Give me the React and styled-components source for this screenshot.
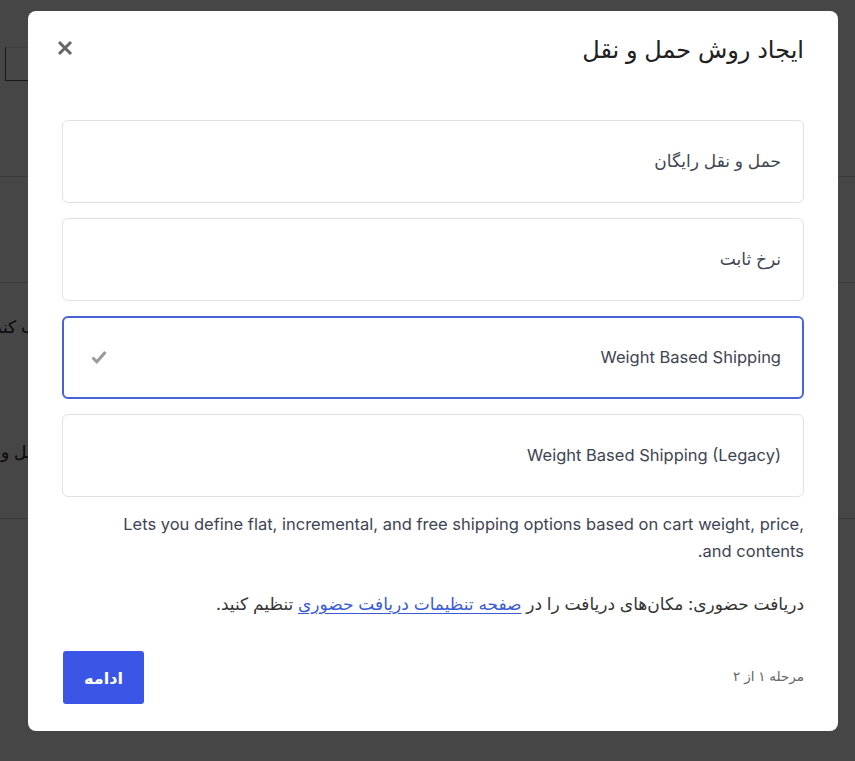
import React, { useState } from 'react'
import styled, { createGlobalStyle } from 'styled-components'

const GlobalStyle = createGlobalStyle`
  * { box-sizing: border-box; }
  html, body {
    margin: 0;
    padding: 0;
    font-family: "Inter", "DejaVu Sans", sans-serif;
  }
`

const options = [
  { id: 'free', label: 'حمل و نقل رایگان', fa: true },
  { id: 'flat', label: 'نرخ ثابت', fa: true },
  { id: 'weight', label: 'Weight Based Shipping' },
  { id: 'legacy', label: 'Weight Based Shipping (Legacy)' },
]

const BgPage = styled.div`
  position: fixed;
  inset: 0;
  background: #fbfbfb;
  direction: rtl;
  font-size: 16px;
  color: #222;
`

const BgHeader = styled.div`
  height: 177px;
  padding: 47px 120px 0 5px;
  border-bottom: 1px solid #cfcfcf;
`

const BgInput = styled.div`
  height: 34px;
  border: 1px solid #555;
  border-top-color: #ddd;
  background: #fff;
`

const BgSection = styled.div`
  height: ${p => p.h}px;
  border-bottom: 1px solid #cfcfcf;
  padding: ${p => p.pad || '0'};
  display: flex;
  flex-direction: column;
  gap: ${p => p.gap || 0}px;
`

const BgText = styled.div`
  white-space: nowrap;
  font-size: 17px;
  margin-left: ${p => p.left}px;
  text-align: left;
  direction: rtl;
`

const Overlay = styled.div`
  position: fixed;
  inset: 0;
  background: rgba(0, 0, 0, 0.72);
`

const Modal = styled.div`
  position: fixed;
  top: 11px;
  left: 28px;
  width: 810px;
  height: 720px;
  background: #fff;
  border-radius: 8px;
  direction: rtl;
  display: flex;
  flex-direction: column;
  padding: 24px 34px 27px;
`

const Header = styled.div`
  display: flex;
  justify-content: space-between;
  align-items: center;
  height: 30px;
`

const Title = styled.h2`
  margin: 0;
  font-size: 24px;
  font-weight: 400;
  color: #202020;
  line-height: 30px;
`

const CloseBtn = styled.button`
  border: none;
  background: transparent;
  padding: 0;
  margin-left: -6px;
  margin-top: -5px;
  width: 18px;
  height: 18px;
  display: flex;
  align-items: center;
  justify-content: center;
  cursor: pointer;
`

const OptionList = styled.div`
  display: flex;
  flex-direction: column;
  gap: 15px;
  margin-top: 55px;
`

const Option = styled.div`
  height: 83px;
  border: ${p => (p.selected ? '2px solid #4763d6' : '1px solid #e2e2e2')};
  border-radius: 6px;
  display: flex;
  align-items: center;
  justify-content: space-between;
  padding: 0 ${p => (p.selected ? 21 : 22)}px 2px ${p => (p.selected ? 27 : 28)}px;
  font-size: ${p => (p.fa ? 17 : 16.5)}px;
  color: #3d4452;
  cursor: pointer;
`

const Description = styled.p`
  margin: 14px 0 0;
  padding-left: 50px;
  font-size: 16.5px;
  line-height: 27px;
  color: #3d4452;
`

const Pickup = styled.p`
  margin: 26px 0 0;
  font-size: 17px;
  line-height: 27px;
  color: #333;
`

const PickupLink = styled.a`
  color: #3a5ad8;
  text-decoration: underline;
  text-underline-offset: 3px;
`

const Footer = styled.div`
  margin-top: auto;
  display: flex;
  justify-content: space-between;
  align-items: center;
  padding-left: 1px;
`

const Step = styled.span`
  font-size: 13.5px;
  color: #666;
  margin-bottom: 3px;
`

const PrimaryButton = styled.button`
  width: 81px;
  height: 53px;
  border: none;
  border-radius: 3px;
  background: #3b56e6;
  color: #fff;
  font-family: inherit;
  font-size: 16px;
  font-weight: 700;
  cursor: pointer;
`

const CloseIcon = () => (
  <svg width="16" height="16" viewBox="0 0 16 16">
    <path d="M2 2 L14 14 M14 2 L2 14" stroke="#666" strokeWidth="3" strokeLinecap="butt" />
  </svg>
)

const CheckIcon = () => (
  <svg width="16" height="14" viewBox="0 0 16 14">
    <path d="M1.5 7.5 L5.8 11.8 L14.5 2" stroke="#9b9b9b" strokeWidth="3" fill="none" />
  </svg>
)

const App = () => {
  const [selected, setSelected] = useState('weight')

  return (
    <>
      <GlobalStyle />
      <BgPage>
        <BgHeader>
          <BgInput />
        </BgHeader>
        <BgSection h={106} />
        <BgSection h={236} pad="34px 0 0" gap={105}>
          <BgText left={-6}>برای هر روشی که مشتری انتخاب کند</BgText>
          <BgText left={-30}>روش حمل و نقل</BgText>
        </BgSection>
      </BgPage>
      <Overlay />
      <Modal>
        <Header>
          <Title>ایجاد روش حمل و نقل</Title>
          <CloseBtn aria-label="close">
            <CloseIcon />
          </CloseBtn>
        </Header>
        <OptionList>
          {options.map(item => (
            <Option
              key={item.id}
              fa={item.fa}
              selected={selected === item.id}
              onClick={() => setSelected(item.id)}
            >
              <span>{item.label}</span>
              {selected === item.id && <CheckIcon />}
            </Option>
          ))}
        </OptionList>
        <Description>
          Lets you define flat, incremental, and free shipping options based on cart weight, price, and contents.
        </Description>
        <Pickup>
          دریافت حضوری: مکان‌های دریافت را در <PickupLink href="#">صفحه تنظیمات دریافت حضوری</PickupLink> تنظیم کنید.
        </Pickup>
        <Footer>
          <Step>مرحله ۱ از ۲</Step>
          <PrimaryButton>ادامه</PrimaryButton>
        </Footer>
      </Modal>
    </>
  )
}

export default App
